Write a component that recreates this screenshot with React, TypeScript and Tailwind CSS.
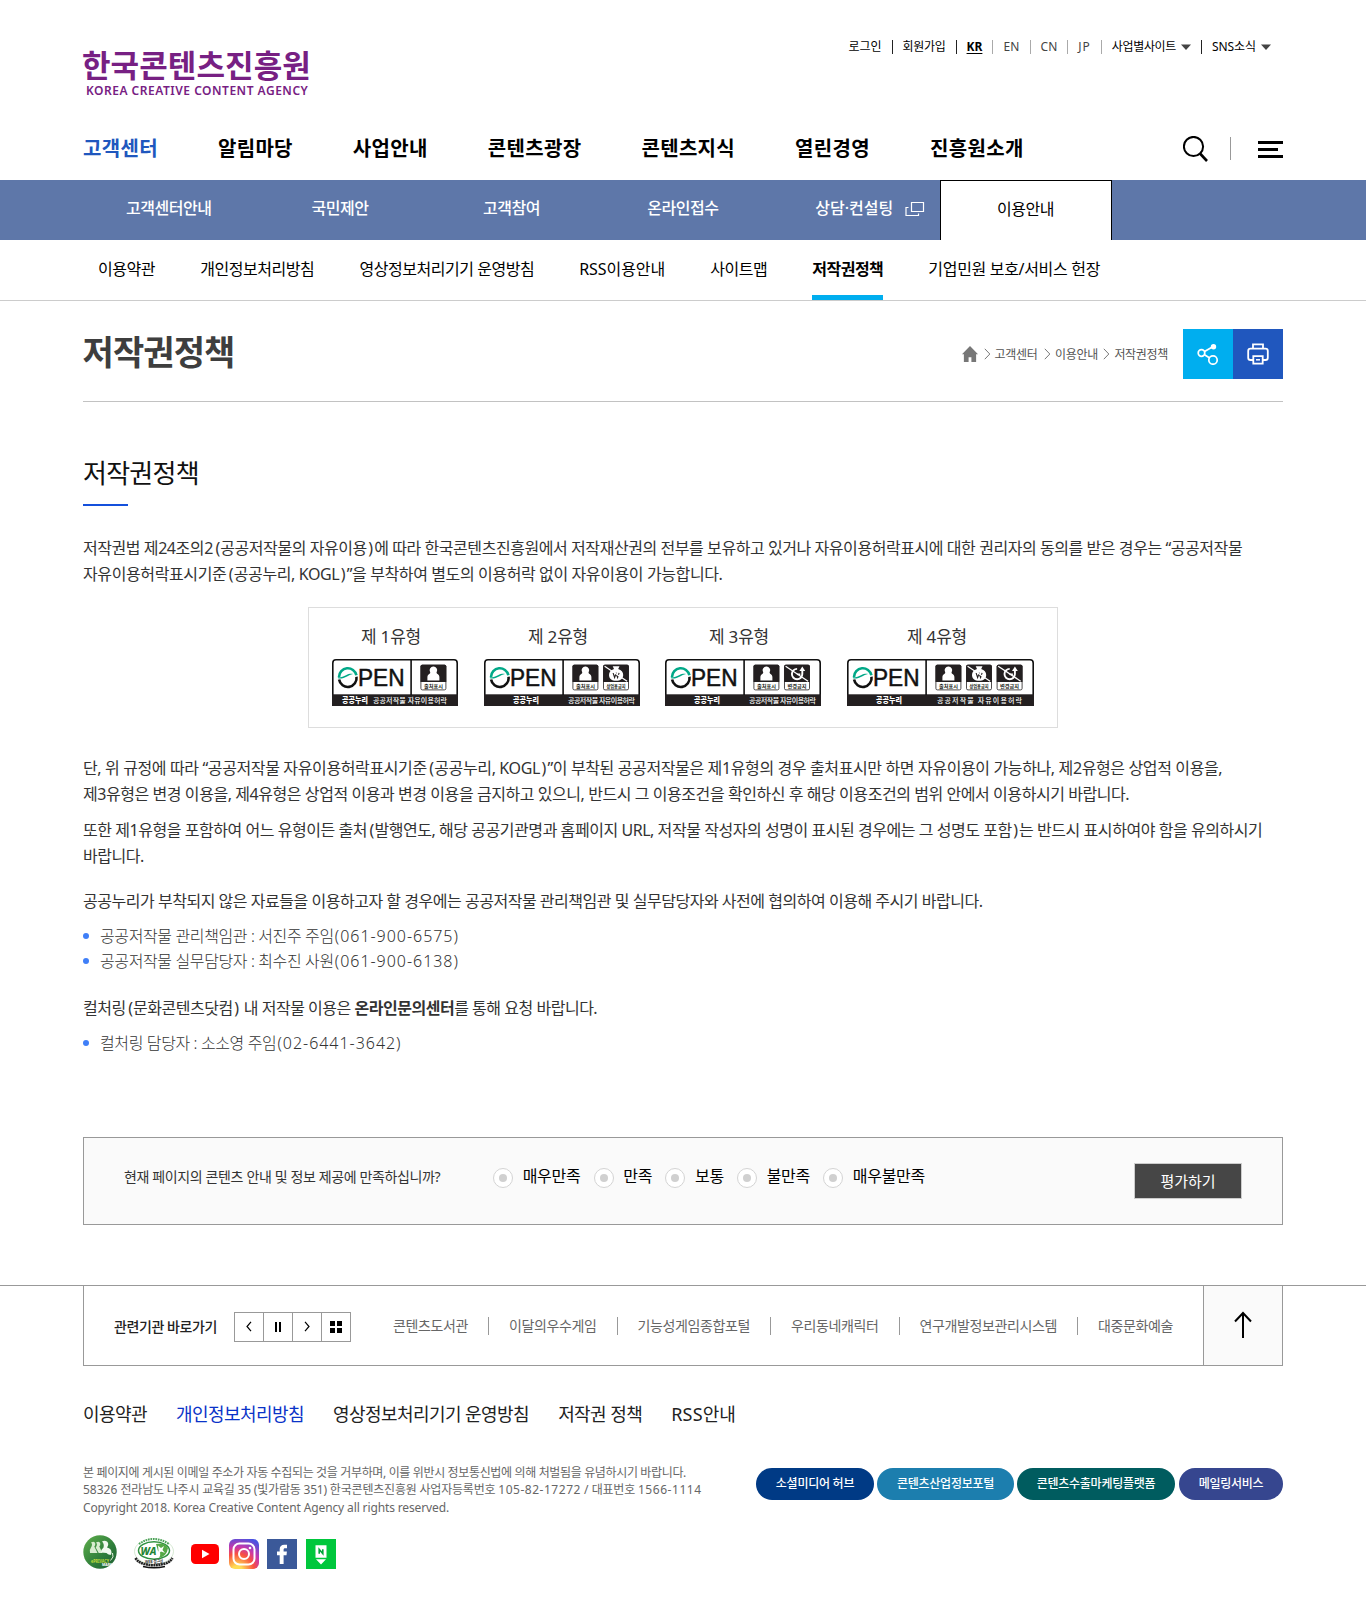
import type { ReactNode } from 'react'

const utilBar = 'h-[14px] w-px bg-[#222] mx-[10px]'
const utilBarLight = 'h-[14px] w-px bg-[#aaa] mx-[10px]'

function Triangle() {
  return (
    <svg className="ml-[5px]" width="10" height="6" viewBox="0 0 10 6">
      <path d="M0 0.5h10L5 6z" fill="#444" />
    </svg>
  )
}

/* Widens the room around parentheses inside tightly tracked Korean text. */
function Loose({ text }: { text: string }) {
  return (
    <>
      {text.split(/([()])/).map((part, i) =>
        part === '(' || part === ')' ? (
          <span key={i} className={part === '(' ? 'mr-[0.5px] ml-[2.5px]' : 'mr-[1.5px] ml-[1.5px]'}>
            {part}
          </span>
        ) : (
          part
        ),
      )}
    </>
  )
}

type Kind = 'by' | 'nc' | 'nd'

function Condition({ kind, x }: { kind: Kind; x: number }) {
  const label = kind === 'by' ? '출처표시' : kind === 'nc' ? '상업용금지' : '변경금지'
  return (
    <g transform={`translate(${x} 5.7)`}>
      <rect x="0.4" y="0.4" width="25" height="24.8" rx="1.5" fill="#fff" stroke="#231f20" strokeWidth="0.8" />
      <path d="M0 17.2V1.5Q0 0 1.5 0H24.3Q25.8 0 25.8 1.5V17.2z" fill="#231f20" />
      {kind === 'by' && (
        <path
          d="M12.9 1.8a3.6 3.6 0 0 1 3.4 5.2c-.4.9-.3 1.5.4 2 1.6 1 2.2 2 2.2 3.6v3.2H6.9v-3.2c0-1.6.6-2.6 2.2-3.6.7-.5.8-1.1.4-2a3.6 3.6 0 0 1 3.4-5.2z"
          fill="#fff"
        />
      )}
      {kind === 'nc' && (
        <>
          <path d="M9.6 1.5h6.8l-1.3 2.9c3.2 1 5 3.3 5 5.8 0 3.6-2.8 5.9-7.1 5.9s-7.1-2.3-7.1-5.9c0-2.5 1.8-4.8 5-5.8z" fill="#fff" />
          <path d="M10 8.2l1.5 4.6 1.5-4 1.5 4 1.5-4.6" fill="none" stroke="#231f20" strokeWidth="1.1" />
        </>
      )}
      {kind === 'nd' && (
        <>
          <path d="M13 4.2A5.2 5.2 0 1 0 18.2 9.4V6" fill="none" stroke="#fff" strokeWidth="1.9" />
          <path d="M12.8 9.6h3.4" stroke="#fff" strokeWidth="1.6" />
          <path d="M15.3 6.3L18.2 1.8l2.9 4.5z" fill="#fff" />
        </>
      )}
      {kind !== 'by' && <path d="M1.5 1.5L24 16.5" stroke="#fff" strokeWidth="1.3" />}
      <text x="12.9" y="23.3" textAnchor="middle" textLength="19" lengthAdjust="spacingAndGlyphs" fontSize="5" fontWeight="600" fill="#231f20">
        {label}
      </text>
    </g>
  )
}

function OpenBadge({
  width,
  conditions,
  brandX,
  descX,
  descWidth,
}: {
  width: number
  conditions: Kind[]
  brandX: number
  descX: number
  descWidth: number
}) {
  return (
    <svg className="block shrink-0" width={width} height="47" viewBox={`0 0 ${width} 47`}>
      <path d={`M0.8 46V4Q0.8 0.8 4 0.8H${width - 4}Q${width - 0.8} 0.8 ${width - 0.8} 4V46z`} fill="#fff" stroke="#111" strokeWidth="1.6" />
      <rect x="0" y="35.3" width={width} height="11.7" fill="#231f20" />
      <rect x="78.3" y="1" width="1.6" height="35" fill="#111" />
      <path d="M7 18A8.8 8.8 0 0 1 24.4 16.2" fill="none" stroke="#00a887" strokeWidth="2.6" />
      <path d="M5.8 18.3C8.5 18.6 11.5 17.5 14 16.3c2.5-1.2 4.5-1.7 7-1.3-2.5.6-4 1.4-6 2.5-3 1.6-6.5 2.6-9 1.7z" fill="#00a887" />
      <path d="M7.1 20.5A8.8 8.8 0 0 0 24.5 17.8" fill="none" stroke="#111" strokeWidth="2.6" />
      <text
        className="font-['Liberation_Sans',sans-serif]"
        x="26"
        y="27"
        fontSize="23.5"
        textLength="46.5"
        lengthAdjust="spacingAndGlyphs"
        fill="#111"
        stroke="#111"
        strokeWidth="0.5"
      >
        PEN
      </text>
      {conditions.map((kind, i) => (
        <Condition key={kind} kind={kind} x={88.5 + i * 30.6} />
      ))}
      <text x={brandX} y="43.8" fontSize="7.5" fontWeight="900" textLength="26" lengthAdjust="spacingAndGlyphs" fill="#fff">
        공공누리
      </text>
      <text x={descX} y="43.7" fontSize="7" fontWeight="500" textLength={descWidth} fill="#fff">
        공공저작물 자유이용허락
      </text>
    </svg>
  )
}

function BadgeColumn({ label, children, className }: { label: string; children: ReactNode; className: string }) {
  return (
    <div className={`flex shrink-0 flex-col items-center ${className}`}>
      <p className="mb-[10px] pr-[7px] text-[17px] leading-[24px] tracking-[-0.2px] text-[#333]">{label}</p>
      {children}
    </div>
  )
}

function RadioOption({ label }: { label: string }) {
  return (
    <label className="mr-[13.2px] flex items-center">
      <span className="mt-[5px] flex h-5 w-5 items-center justify-center rounded-full border border-[#d4d4d4] bg-white">
        <span className="h-2 w-2 rounded-full bg-[#d0d0d0]" />
      </span>
      <span className="ml-[9.7px] text-[16px] leading-6 tracking-[-0.3px] text-black">{label}</span>
    </label>
  )
}

function ListItem({ name, phone }: { name: string; phone: string }) {
  return (
    <li className="flex h-[25px] items-center text-[16px] leading-[25px] font-light text-[#333]">
      <span className="mr-[11px] mb-px h-[6px] w-[6px] rounded-full bg-[#3f7ff8]" />
      <span className="tracking-[-0.38px] whitespace-pre">{name}</span>
      <span className="ml-px tracking-[0.97px]">{phone}</span>
    </li>
  )
}

function Crumb({ label, className }: { label: string; className: string }) {
  return (
    <>
      <svg className={`mr-[4px] ${className}`} width="7" height="12" viewBox="0 0 7 12">
        <path d="M0.8 0.8L5.8 6L0.8 11.2" fill="none" stroke="#777" />
      </svg>
      <span className="mt-px text-[12px] leading-4 tracking-[-0.32px] text-[#555]">{label}</span>
    </>
  )
}

const mainMenu = ['고객센터', '알림마당', '사업안내', '콘텐츠광장', '콘텐츠지식', '열린경영', '진흥원소개']
const related = ['콘텐츠도서관', '이달의우수게임', '기능성게임종합포털', '우리동네캐릭터', '연구개발정보관리시스템', '대중문화예술']

export default function App() {
  return (
    <div className="min-h-[1618px] w-[1366px] bg-white font-['Noto_Sans','Noto_Sans_CJK_KR',sans-serif] text-[#333]">
      <header>
        <div className="mx-auto flex h-[180px] w-[1200px] flex-col">
          <div className="flex h-[116px] items-start justify-between">
            <a className="mt-[47px] block whitespace-nowrap text-[#772083]">
              <span className="-ml-px block h-[36px] text-[31px] leading-[36px] font-bold tracking-[0.1px]">한국콘텐츠진흥원</span>
              <span className="ml-[3px] block h-[15px] text-[12px] leading-[15px] font-semibold tracking-[0.51px]">KOREA CREATIVE CONTENT AGENCY</span>
            </a>
            <div className="mt-[38px] mr-[12px] flex h-[18px] items-center text-[12px] leading-[18px] text-black">
              <span>로그인</span>
              <i className={utilBar} />
              <span className="tracking-[-0.3px]">회원가입</span>
              <i className={utilBar} />
              <span className="font-bold underline underline-offset-2">KR</span>
              <i className={utilBarLight} />
              <span className="tracking-[0.2px] text-[#444]">EN</span>
              <i className={utilBarLight} />
              <span className="text-[#444]">CN</span>
              <i className={utilBarLight} />
              <span className="tracking-[0.9px] text-[#444]">JP</span>
              <i className={utilBarLight} />
              <span className="tracking-[-0.3px]">사업별사이트</span>
              <Triangle />
              <i className={utilBar} />
              <span className="tracking-[-0.1px]">SNS소식</span>
              <Triangle />
            </div>
          </div>
          <div className="flex h-16 items-center justify-between">
            <nav className="mt-[2px] flex gap-[60px] text-[20px] leading-8 font-bold tracking-[0.33px] text-black">
              {mainMenu.map((item, i) => (
                <a key={item} className={i === 0 ? 'text-[#2057be]' : ''}>
                  {item}
                </a>
              ))}
            </nav>
            <div className="mt-[1px] flex items-center">
              <svg className="mt-[1px]" width="26" height="26" viewBox="0 0 26 26">
                <circle cx="10.5" cy="10.5" r="9.6" fill="none" stroke="#000" strokeWidth="2" />
                <path d="M17 17.5L24 25" stroke="#000" strokeWidth="2.6" />
              </svg>
              <span className="mr-[27px] ml-[21px] h-[23px] w-px bg-[#999]" />
              <span className="mt-[2px] flex w-[25px] flex-col gap-[4px]">
                <i className="h-[3px] w-full bg-black" />
                <i className="h-[3px] w-5 bg-black" />
                <i className="h-[3px] w-full bg-black" />
              </span>
            </div>
          </div>
        </div>

        <div className="h-[60px] bg-[#5e77a9]">
          <nav className="mx-auto flex h-full w-[1200px] text-[16px] leading-6 font-medium tracking-[-0.45px] text-white">
            {['고객센터안내', '국민제안', '고객참여', '온라인접수'].map((item) => (
              <a key={item} className="w-[171.4px] pt-[16px] text-center">
                {item}
              </a>
            ))}
            <a className="relative w-[171.4px] pt-[16px] text-center tracking-[0px]">
              상담·컨설팅
              <svg className="absolute top-[21px] left-[136px]" width="20" height="16" viewBox="0 0 20 16">
                <path d="M6.5 1.5h12v9h-12zM3.5 6.5h-2.5v8h12.5v-2" fill="none" stroke="#fff" strokeWidth="1.2" />
              </svg>
            </a>
            <a className="w-[172px] border-x border-t border-black bg-white pt-[16px] pr-px text-center font-normal text-black">이용안내</a>
          </nav>
        </div>

        <div className="h-[61px] border-b border-[#ccc]">
          <nav className="mx-auto flex h-full w-[1200px] gap-[45px] pl-[15px] text-[16px] leading-[58px] tracking-[-0.44px] text-black">
            <a>이용약관</a>
            <a>개인정보처리방침</a>
            <a className="tracking-[-0.46px]">영상정보처리기기 운영방침</a>
            <a className="tracking-[-0.06px]">RSS이용안내</a>
            <a>사이트맵</a>
            <a className="h-[60px] border-b-[5px] border-[#00aeef] font-bold tracking-[-0.52px]">저작권정책</a>
            <a className="tracking-[-0.32px]">기업민원 보호/서비스 헌장</a>
          </nav>
        </div>
      </header>

      <main className="mx-auto w-[1200px]">
        <div className="flex h-[101px] items-start justify-between border-b border-[#c2c2c2] pt-7">
          <h1 className="-ml-[0.5px] text-[34px] leading-[46px] font-bold tracking-[-0.9px] text-[#3e3e3e]">저작권정책</h1>
          <div className="flex items-center">
            <svg width="16" height="16" viewBox="0 0 17 17">
              <path d="M8.5 0L17 8.8h-2V17H10v-5H7v5H2V8.8H0z" fill="#777" />
            </svg>
            <Crumb label="고객센터" className="ml-[6px]" />
            <Crumb label="이용안내" className="ml-[6.5px]" />
            <Crumb label="저작권정책" className="ml-[5.5px]" />
            <span className="ml-[15px] flex h-[50px] w-[50px] items-center justify-center bg-[#00aeef]">
              <svg width="22" height="22" viewBox="0 0 22 22" fill="none" stroke="#fff" strokeWidth="1.7">
                <circle cx="4.5" cy="10" r="3.3" />
                <circle cx="16" cy="17" r="4.2" />
                <circle cx="16.5" cy="3.8" r="2.7" fill="#fff" stroke="none" />
                <path d="M7.5 8.5L14.5 4.5M7.5 11.8L12.3 14.7" />
              </svg>
            </span>
            <span className="flex h-[50px] w-[50px] items-center justify-center bg-[#2057be]">
              <svg width="22" height="22" viewBox="0 0 22 22" fill="none" stroke="#fff" strokeWidth="1.8">
                <path d="M6 5.5V1.4h10v4.1" />
                <path d="M6 17H3.5Q1.2 17 1.2 14.7V8Q1.2 5.7 3.5 5.7h15Q20.8 5.7 20.8 8v6.7Q20.8 17 18.5 17H16" />
                <path d="M6.3 13.2h9.4v7.4H6.3z" />
                <path d="M9 16.8h4" strokeWidth="1.5" />
              </svg>
            </span>
          </div>
        </div>

        <h2 className="mt-[53px] text-[26px] leading-9 tracking-[-0.74px] text-[#111]">저작권정책</h2>
        <div className="mt-[13px] h-[2px] w-[45px] bg-[#1450dc]" />

        <div className="text-[16px] leading-[26px] whitespace-nowrap">
          <p className="mt-[29px]">
            <span className="block tracking-[-0.435px]">
              <Loose text="저작권법 제24조의2(공공저작물의 자유이용)에 따라 한국콘텐츠진흥원에서 저작재산권의 전부를 보유하고 있거나 자유이용허락표시에 대한 권리자의 동의를 받은 경우는 “공공저작물" />
            </span>
            <span className="block tracking-[-0.39px]">
              <Loose text="자유이용허락표시기준(공공누리, KOGL)”을 부착하여 별도의 이용허락 없이 자유이용이 가능합니다." />
            </span>
          </p>

          <div className="mx-auto mt-[20px] flex h-[121px] w-[750px] border border-[#ddd] pt-[17px] pl-[22.5px]">
            <BadgeColumn label="제 1유형" className="mr-[26px]">
              <OpenBadge width={126} conditions={['by']} brandX={10} descX={41} descWidth={74} />
            </BadgeColumn>
            <BadgeColumn label="제 2유형" className="mr-[25px]">
              <OpenBadge width={156} conditions={['by', 'nc']} brandX={29} descX={84} descWidth={67} />
            </BadgeColumn>
            <BadgeColumn label="제 3유형" className="mr-[26.5px]">
              <OpenBadge width={156} conditions={['by', 'nd']} brandX={29} descX={84} descWidth={67} />
            </BadgeColumn>
            <BadgeColumn label="제 4유형" className="">
              <OpenBadge width={187} conditions={['by', 'nc', 'nd']} brandX={29} descX={90} descWidth={85} />
            </BadgeColumn>
          </div>

          <p className="mt-[28px] leading-[25.5px]">
            <span className="block tracking-[-0.375px]">
              <Loose text="단, 위 규정에 따라 “공공저작물 자유이용허락표시기준(공공누리, KOGL)”이 부착된 공공저작물은 제1유형의 경우 출처표시만 하면 자유이용이 가능하나, 제2유형은 상업적 이용을," />
            </span>
            <span className="block tracking-[-0.436px]">
              제3유형은 변경 이용을, 제4유형은 상업적 이용과 변경 이용을 금지하고 있으니, 반드시 그 이용조건을 확인하신 후 해당 이용조건의 범위 안에서 이용하시기 바랍니다.
            </span>
          </p>
          <p className="mt-[10px]">
            <span className="block tracking-[-0.452px]">
              <Loose text="또한 제1유형을 포함하여 어느 유형이든 출처(발행연도, 해당 공공기관명과 홈페이지 URL, 저작물 작성자의 성명이 표시된 경우에는 그 성명도 포함)는 반드시 표시하여야 함을 유의하시기" />
            </span>
            <span className="block tracking-[-0.44px]">바랍니다.</span>
          </p>
          <p className="mt-[19px] tracking-[-0.475px]">
            공공누리가 부착되지 않은 자료들을 이용하고자 할 경우에는 공공저작물 관리책임관 및 실무담당자와 사전에 협의하여 이용해 주시기 바랍니다.
          </p>
          <ul className="mt-[10px]">
            <ListItem name="공공저작물 관리책임관 : 서진주 주임" phone="(061-900-6575)" />
            <ListItem name="공공저작물 실무담당자 : 최수진 사원" phone="(061-900-6138)" />
          </ul>
          <p className="mt-[21px] tracking-[-0.48px]">
            <Loose text="컬처링(문화콘텐츠닷컴) 내 저작물 이용은 " />
            <strong className="font-bold">온라인문의센터</strong>를 통해 요청 바랍니다.
          </p>
          <ul className="mt-[10px]">
            <ListItem name="컬처링 담당자 : 소소영 주임" phone="(02-6441-3642)" />
          </ul>
        </div>

        <section className="mt-[81px] flex h-[88px] items-start border border-[#999] bg-[#fafafa]">
          <p className="mt-[27px] ml-[40px] w-[369px] text-[14px] leading-6 tracking-[-0.37px] text-[#333]">
            현재 페이지의 콘텐츠 안내 및 정보 제공에 만족하십니까?
          </p>
          <div className="mt-[25px] flex">
            {['매우만족', '만족', '보통', '불만족', '매우불만족'].map((item) => (
              <RadioOption key={item} label={item} />
            ))}
          </div>
          <button className="mt-[25px] mr-10 ml-auto h-9 w-[108px] border border-[#ccc] bg-[#464646] pb-[1px] text-[15px] leading-8 text-white">평가하기</button>
        </section>
      </main>

      <footer className="mt-[60px] border-t border-[#999]">
        <div className="mx-auto w-[1200px]">
          <div className="flex h-[80px] items-center border-x border-b border-[#999]">
            <h3 className="mt-[2px] ml-[30px] w-[120px] text-[14px] leading-6 font-medium tracking-[-0.41px] text-[#222]">관련기관 바로가기</h3>
            <div className="mt-[2px] flex h-[30px] w-[117px] shrink-0 divide-x divide-[#999] border border-[#999]">
              <span className="flex flex-1 items-center justify-center">
                <svg width="6" height="11" viewBox="0 0 6 11">
                  <path d="M5 0.8L1 5.5L5 10.2" fill="none" stroke="#000" strokeWidth="1.2" />
                </svg>
              </span>
              <span className="flex flex-1 items-center justify-center gap-[2px]">
                <i className="h-[10px] w-[2px] bg-black" />
                <i className="h-[10px] w-[2px] bg-black" />
              </span>
              <span className="flex flex-1 items-center justify-center">
                <svg width="6" height="11" viewBox="0 0 6 11">
                  <path d="M1 0.8L5 5.5L1 10.2" fill="none" stroke="#000" strokeWidth="1.2" />
                </svg>
              </span>
              <span className="flex flex-1 items-center justify-center">
                <span className="grid grid-cols-2 gap-[2px]">
                  <i className="h-[5px] w-[5px] bg-black" />
                  <i className="h-[5px] w-[5px] bg-black" />
                  <i className="h-[5px] w-[5px] bg-black" />
                  <i className="h-[5px] w-[5px] bg-black" />
                </span>
              </span>
            </div>
            <ul className="ml-[42px] flex items-center text-[14px] leading-6 tracking-[-0.38px] whitespace-nowrap text-[#666]">
              {related.map((item, i) => (
                <li key={item} className="flex items-center">
                  {i > 0 && <i className="mx-5 h-[18px] w-px bg-[#999]" />}
                  {item}
                </li>
              ))}
            </ul>
            <span className="ml-auto flex h-full w-[79px] items-center justify-center border-l border-[#999] bg-[#fafafa]">
              <svg className="mb-px" width="20" height="28" viewBox="0 0 20 28">
                <path d="M10 27V2M2 10.500L10 2l8 8.500" fill="none" stroke="#000" strokeWidth="2" />
              </svg>
            </span>
          </div>

          <nav className="mt-[34px] flex gap-[29px] text-[18px] leading-7 tracking-[-0.56px] text-[#222]">
            <a>이용약관</a>
            <a className="text-[#0a33c8]">개인정보처리방침</a>
            <a>영상정보처리기기 운영방침</a>
            <a>저작권 정책</a>
            <a className="tracking-[0.15px]">RSS안내</a>
          </nav>

          <div className="mt-[35px] flex items-start justify-between">
            <div className="text-[12px] leading-[18px] whitespace-nowrap text-[#666]">
              <p className="mt-px mb-[-1px] tracking-[-0.353px]">본 페이지에 게시된 이메일 주소가 자동 수집되는 것을 거부하며, 이를 위반시 정보통신법에 의해 처벌됨을 유념하시기 바랍니다.</p>
              <p>
                <span>58326 </span>
                <span className="tracking-[-0.2px]">전라남도 나주시 교육길 35 (빛가람동 351) 한국콘텐츠진흥원 사업자등록번호 </span>
                <span className="tracking-[0.52px]">105-82-17272</span> / <span className="tracking-[-0.2px]">대표번호 </span>
                <span className="tracking-[0.56px]">1566-1114</span>
              </p>
              <p className="tracking-[-0.127px]">Copyright 2018. Korea Creative Content Agency all rights reserved.</p>
            </div>
            <div className="mt-[5px] flex text-[12px] leading-[31px] font-medium tracking-[-0.25px] text-white">
              <a className="mr-[3px] h-8 w-[118px] rounded-full bg-[#003a85] text-center">소셜미디어 허브</a>
              <a className="mr-[3px] h-8 w-[137px] rounded-full bg-[#1c7eae] text-center">콘텐츠산업정보포털</a>
              <a className="mr-1 h-8 w-[158px] rounded-full bg-[#005c5f] text-center">콘텐츠수출마케팅플랫폼</a>
              <a className="h-8 w-[104px] rounded-full bg-[#36468f] text-center">메일링서비스</a>
            </div>
          </div>

          <div className="mt-[18px] flex items-end">
            <svg width="34" height="34" viewBox="0 0 34 34">
              <defs>
                <linearGradient id="eprivacy" x1="0" y1="0" x2="1" y2="1">
                  <stop offset="0" stopColor="#5fae4c" />
                  <stop offset="0.6" stopColor="#2e7d3a" />
                  <stop offset="1" stopColor="#1d5c33" />
                </linearGradient>
              </defs>
              <circle cx="17" cy="17" r="16.7" fill="url(#eprivacy)" />
              <path d="M8 7.5q3.5-2 4.3 1 .2 2-1 3l3.2 6.5H7q-1-3 1-5.5Q10 9 8 7.5zM13 7.5q3.5-2 4.3 1 .2 2-1 3l3.2 6.5h-3.8l-3-5.5Q15 9 13 7.5z" fill="#d9ecd0" />
              <path d="M19 6.5q2.5-1.5 5 0 2.5 2.5 0 6 4.5 1 4.5 5 0 1.5-1 2.5-3-.5-4-2l-5.5-.5q0-3 2.5-5Q21.5 9 19 6.5z" fill="#f1f8ee" />
              <path d="M29.5 18q2 4-2 7.5" fill="none" stroke="#e4f1dc" />
              <text x="8" y="27.5" fontSize="5" fontWeight="700" textLength="18" lengthAdjust="spacingAndGlyphs" fill="#c3df3a">
                ePRIVACY
              </text>
              <text x="19" y="31" fontSize="3.5" fontWeight="700" fill="#fff">
                MARK
              </text>
            </svg>
            <svg className="ml-4" width="42" height="33" viewBox="0 0 42 33">
              <ellipse cx="21" cy="15.5" rx="19.5" ry="12.8" fill="#fff" stroke="#b8d8b4" strokeWidth="0.6" />
              <path d="M6 8Q20-2 36 8" fill="none" stroke="#4ba258" strokeWidth="2" strokeDasharray="1.6 0.9" />
              <ellipse cx="21" cy="14.5" rx="15.5" ry="8.8" fill="#fff" stroke="#2f9140" strokeWidth="1.5" />
              <path d="M23 8q9-2 12 4-1 8-9 10 3-5-1-7z" fill="#54a846" />
              <path d="M25 9.5l3 2.5 3-2-1.5 4 2.5 3-4-1.5-3 3 .5-4z" fill="#fff" />
              <text x="7.5" y="18.5" fontSize="10.5" fontWeight="800" fontStyle="italic" textLength="16" lengthAdjust="spacingAndGlyphs" fill="#1f8537">
                WA
              </text>
              <path d="M2.5 22q3 5 9.5 6 9 2.5 18 0 6.5-1 9.5-6" fill="none" stroke="#222" strokeWidth="2.6" strokeDasharray="2 0.5" />
              <text x="12" y="26.5" fontSize="4.2" fontWeight="700" textLength="18" lengthAdjust="spacingAndGlyphs" fill="#333">
                WEB 접근성
              </text>
              <path d="M10 30.5q11 2.5 22 0" fill="none" stroke="#111" strokeWidth="1.5" />
            </svg>
            <svg className="mb-[5px] ml-4" width="29" height="20" viewBox="0 0 29 20">
              <rect width="28" height="20" x="0" rx="4.5" fill="#f00" />
              <path d="M11 5.8l7.5 4.2-7.5 4.2z" fill="#fff" />
            </svg>
            <svg className="ml-[9px]" width="30" height="30" viewBox="0 0 30 30">
              <defs>
                <radialGradient id="insta" cx="0.27" cy="1.07" r="1.15">
                  <stop offset="0" stopColor="#fd5" />
                  <stop offset="0.15" stopColor="#fd5" />
                  <stop offset="0.5" stopColor="#f9503f" />
                  <stop offset="0.7" stopColor="#c837ab" />
                  <stop offset="1" stopColor="#4b52e0" />
                </radialGradient>
              </defs>
              <rect width="30" height="30" rx="6" fill="url(#insta)" />
              <rect x="4.5" y="4.5" width="21" height="21" rx="6" fill="none" stroke="#fff" strokeWidth="2" />
              <circle cx="15" cy="15" r="5" fill="none" stroke="#fff" strokeWidth="2" />
              <circle cx="21" cy="9" r="1.3" fill="#fff" />
            </svg>
            <svg className="ml-2" width="30" height="30" viewBox="0 0 30 30">
              <rect width="30" height="30" fill="#3b5999" />
              <path d="M12.7 25V16.3H10V12.6h2.7V10.3C12.7 7.3 14.5 5.8 17.2 5.8H20v3.5h-1.8c-1.3 0-1.6.6-1.6 1.6v1.7h3.3l-.4 3.7h-2.9V25z" fill="#fff" />
            </svg>
            <svg className="ml-[9px]" width="30" height="30" viewBox="0 0 30 30">
              <rect width="30" height="30" fill="#00c73c" />
              <path d="M9.5 6.3h11v12.4h-11zM10 20.2h10l-5 5.3z" fill="#fff" />
              <path d="M13.2 14.8V10.4l3.6 4.2V10.2" fill="none" stroke="#00a53a" strokeWidth="1.6" />
            </svg>
          </div>
        </div>
      </footer>
    </div>
  )
}
